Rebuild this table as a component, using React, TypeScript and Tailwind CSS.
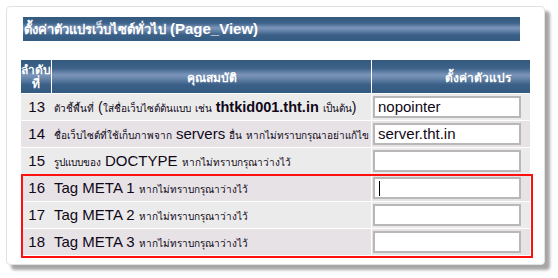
import React from "react";

const thai = "text-[10px]";
const Sp = () => <span className="inline-block w-[4px]" />;

type Row = { n: number; label: React.ReactNode; value: string; caret?: boolean };

const meta = (k: number) => (
  <>
    Tag META {k}
    <Sp />
    <span className={thai}>หากไม่ทราบกรุณาว่างไว้</span>
  </>
);

const rows: Row[] = [
  {
    n: 13,
    label: (
      <>
        <span className={thai}>ตัวชี้พื้นที่</span>
        <Sp />
        <span className="text-[14px]">(</span>
        <span className={thai}>ใส่ชื่อเว็บไซต์ต้นแบบ</span>
        <Sp />
        <span className={thai}>เช่น</span>
        <Sp />
        <b className="text-[14.5px]">thtkid001.tht.in</b>
        <Sp />
        <span className={thai}>เป็นต้น</span>
        <span className="text-[14px]">)</span>
      </>
    ),
    value: "nopointer",
  },
  {
    n: 14,
    label: (
      <>
        <span className={thai}>ชื่อเว็บไซต์ที่ใช้เก็บภาพจาก</span>
        <Sp />
        servers
        <Sp />
        <span className={thai}>อื่น</span>
        <Sp />
        <span className={thai}>หากไม่ทราบกรุณาอย่าแก้ไข</span>
      </>
    ),
    value: "server.tht.in",
  },
  {
    n: 15,
    label: (
      <>
        <span className={thai}>รูปแบบของ</span>
        <Sp />
        DOCTYPE
        <Sp />
        <span className={thai}>หากไม่ทราบกรุณาว่างไว้</span>
      </>
    ),
    value: "",
  },
  { n: 16, label: meta(1), value: "", caret: true },
  { n: 17, label: meta(2), value: "" },
  { n: 18, label: meta(3), value: "" },
];

const barBg =
  "bg-[linear-gradient(to_bottom,#34597e_0%,#3d6289_25%,#7b95b9_45%,#6a87ad_55%,#3b6087_75%,#335a80_100%)]";

export default function App() {
  return (
    <div
      className="w-[558px] h-[278px] bg-white relative"
      style={{ fontFamily: '"Liberation Sans", Tahoma, "Noto Sans", sans-serif' }}
    >
      <div className="absolute left-[6px] top-[6px] w-[539px] h-[259px] bg-white rounded-[4px] border border-[#e2e2e2] shadow-[5px_5px_3px_rgba(0,0,0,0.35)]">
        <div className="flex flex-col pl-[14px] pt-[10px]">
          {/* title bar */}
          <div
            className={`ml-[2px] w-[497px] h-[24px] ${barBg} flex items-center pl-[1px] text-white font-bold`}
          >
            <span className="whitespace-nowrap">
              <span className="text-[13px]">ตั้งค่าตัวแปรเว็บไซต์ทั่วไป</span>
              <Sp />
              <span className="text-[15px]">(Page_View)</span>
            </span>
          </div>

          {/* settings table */}
          <div className="mt-[19px] w-[509px] flex flex-col gap-[1px] text-[15px] text-[#100818]">
            <div className="flex gap-[1px] h-[33px] text-white font-bold text-[12px]">
              <div className={`w-[30px] ${barBg} flex items-center justify-center text-center leading-[14px]`}>
                ลำดับ
                <br />
                ที่
              </div>
              <div className={`w-[319px] ${barBg} flex items-center justify-center pt-[3px]`}>
                คุณสมบัติ
              </div>
              <div className={`flex-1 ${barBg} flex items-center justify-end pr-[19px] pt-[3px]`}>
                ตั้งค่าตัวแปร
              </div>
            </div>

            {rows.map((r, i) => (
              <div
                key={r.n}
                className={`flex gap-[1px] h-[26px] ${i % 2 === 0 ? "bg-[#ecebeb]" : "bg-[#e6e2e6]"}`}
              >
                <div className="w-[30px] flex items-center justify-end pr-[6px]">{r.n}</div>
                <div className="relative w-[319px] flex items-center pl-[2px] overflow-hidden">
                  <span className="absolute left-[-1px] top-0 bottom-0 w-[1px] bg-white" />
                  <span className="whitespace-nowrap">{r.label}</span>
                </div>
                <div className="relative flex-1 flex items-center pl-[1px]">
                  <span className="absolute left-[-1px] top-0 bottom-0 w-[1px] bg-white" />
                  <div className="w-[148px] h-[22px] bg-white border-[2px] border-[#b8b8b8] flex items-center pl-[3px]">
                    {r.value}
                    {r.caret && <span className="w-[1px] h-[15px] bg-black ml-[1px]" />}
                  </div>
                </div>
              </div>
            ))}
          </div>
        </div>
      </div>

      {/* highlight around the META rows */}
      <div className="absolute left-[21px] top-[174px] w-[512px] h-[84px] border-[2px] border-[#ff1010] pointer-events-none" />
    </div>
  );
}
